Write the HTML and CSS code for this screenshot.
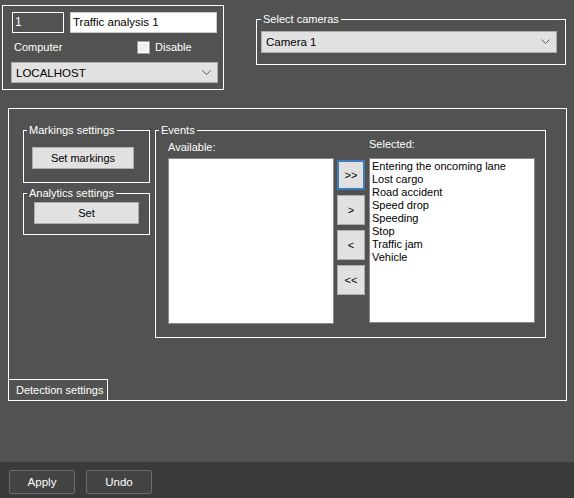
FILE: index.html
```html
<!DOCTYPE html>
<html lang="en">
<head>
    <meta charset="UTF-8">
    <title>Traffic analysis 1</title>
    <link rel="stylesheet" href="styles.css">
</head>
<body>
    <div class="window">
        <div class="content">
            <div class="top">
                <!-- Object id / name / computer -->
                <div class="ident">
                    <div class="row">
                        <div class="field num">1</div>
                        <div class="field name">Traffic analysis 1</div>
                    </div>
                    <div class="row mid">
                        <span class="label computer">Computer</span>
                        <span class="check"></span>
                        <span class="label">Disable</span>
                    </div>
                    <div class="combo host">
                        <span>LOCALHOST</span>
                        <svg width="9" height="6" viewBox="0 0 9 6"><polyline points="0.5,0.5 4.5,4.5 8.5,0.5" fill="none" stroke="#5a5a5a" stroke-width="1"/></svg>
                    </div>
                </div>

                <div class="group cameras">
                    <span class="legend">Select cameras</span>
                    <div class="combo cam">
                        <span>Camera 1</span>
                        <svg width="9" height="6" viewBox="0 0 9 6"><polyline points="0.5,0.5 4.5,4.5 8.5,0.5" fill="none" stroke="#5a5a5a" stroke-width="1"/></svg>
                    </div>
                </div>
            </div>

            <!-- Detection settings tab page -->
            <div class="detect">
                <div class="detect-body">
                    <div class="side">
                        <div class="group markings">
                            <span class="legend">Markings settings</span>
                            <div class="btn wide">Set markings</div>
                        </div>
                        <div class="group analytics">
                            <span class="legend">Analytics settings</span>
                            <div class="btn set">Set</div>
                        </div>
                    </div>

                    <div class="group events">
                        <span class="legend">Events</span>
                        <div class="col">
                            <div class="label cap">Available:</div>
                            <div class="list"></div>
                        </div>
                        <div class="arrows">
                            <div class="btn arrow focus">&gt;&gt;</div>
                            <div class="btn arrow">&gt;</div>
                            <div class="btn arrow">&lt;</div>
                            <div class="btn arrow">&lt;&lt;</div>
                        </div>
                        <div class="col">
                            <div class="label cap sel">Selected:</div>
                            <div class="list short">
                                <div>Entering the oncoming lane</div>
                                <div>Lost cargo</div>
                                <div>Road accident</div>
                                <div>Speed drop</div>
                                <div>Speeding</div>
                                <div>Stop</div>
                                <div>Traffic jam</div>
                                <div>Vehicle</div>
                            </div>
                        </div>
                    </div>
                </div>
                <div class="tab">Detection settings</div>
            </div>
        </div>

        <div class="footer">
            <div class="fbtn">Apply</div>
            <div class="fbtn">Undo</div>
        </div>
    </div>
</body>
</html>
```

FILE: styles.css
```css
/* Dark settings panel */
body {
    margin: 0;
    background: #525252;
    font-family: "Liberation Sans", Arial, sans-serif;
    font-size: 11px;
    color: #fff;
}

.window {
    width: 574px;
    height: 498px;
    display: flex;
    flex-direction: column;
}

.content {
    flex: 1;
}

.top {
    display: flex;
    align-items: flex-start;
}

.ident {
    box-sizing: border-box;
    width: 222px;
    height: 85px;
    margin: 5px 0 0 2px;
    padding: 6px 6px 0 9px;
    border: 1px solid #fff;
}

.row {
    display: flex;
    align-items: center;
}

.field {
    box-sizing: border-box;
    height: 21px;
    line-height: 19px;
    padding: 0 2px;
    border: 1px solid #fff;
    font-size: 12px;
}

.num {
    width: 52px;
    color: #fff;
}

.name {
    width: 147px;
    margin-left: 6px;
    background: #fff;
    color: #000;
    border-color: #c8c8c8;
    font-size: 11.5px;
}

.mid {
    height: 29px;
}

.label {
    line-height: 13px;
}

.computer {
    width: 123px;
    margin-left: 2px;
}

.check {
    box-sizing: border-box;
    width: 13px;
    height: 13px;
    margin-right: 5px;
    border: 1px solid #9a9a9a;
    background: #f0f0f0;
    box-shadow: inset 0 0 0 1px #fff;
}

.combo {
    box-sizing: border-box;
    display: flex;
    align-items: center;
    justify-content: space-between;
    padding: 0 6px 0 4px;
    background: #e1e1e1;
    border: 1px solid #adadad;
    color: #000;
    font-size: 11.5px;
}

.host {
    width: 207px;
    height: 21px;
    margin-left: -1px;
}

.cam {
    width: 296px;
    height: 22px;
}

.group {
    position: relative;
    box-sizing: border-box;
    border: 1px solid #fff;
}

.legend {
    position: absolute;
    top: -7px;
    left: 3px;
    padding: 0 2px;
    background: #525252;
    line-height: 13px;
    white-space: nowrap;
}

.cameras {
    width: 310px;
    height: 46px;
    margin: 19px 0 0 32px;
    padding: 11px 0 0 4px;
}

.cameras .legend {
    left: 4px;
}

.detect {
    box-sizing: border-box;
    display: flex;
    flex-direction: column;
    width: 559px;
    height: 293px;
    margin: 18px 0 0 8px;
    border: 1px solid #fff;
}

.detect-body {
    display: flex;
    align-items: flex-start;
    padding: 21px 0 0 14px;
}

.side {
    width: 127px;
}

.markings {
    height: 53px;
    padding: 16px 0 0 8px;
}

.analytics {
    height: 42px;
    margin-top: 10px;
    padding: 8px 0 0 10px;
}

.btn {
    box-sizing: border-box;
    height: 22px;
    line-height: 20px;
    text-align: center;
    background: #e1e1e1;
    border: 1px solid #adadad;
    color: #000;
    font-size: 11px;
}

.wide {
    width: 102px;
}

.set {
    width: 105px;
}

.events {
    display: flex;
    width: 391px;
    height: 208px;
    margin-left: 5px;
    padding: 10px 0 0 12px;
}

.cap {
    height: 13px;
    margin-bottom: 4px;
}

.cap.sel {
    margin-top: -3px;
    margin-bottom: 7px;
}

.list {
    box-sizing: border-box;
    width: 166px;
    height: 166px;
    padding: 1px 2px;
    background: #fff;
    border: 1px solid #8a8a8a;
    color: #000;
    font-size: 11px;
    line-height: 13px;
}

.list.short {
    height: 165px;
}

.arrows {
    display: flex;
    flex-direction: column;
    gap: 5px;
    margin: 2px 4px 0 3px;
    padding-top: 17px;
}

.arrow {
    width: 28px;
    height: 30px;
    line-height: 28px;
}

.arrow.focus {
    border: 2px solid #3d7ab8;
    line-height: 26px;
}

.tab {
    box-sizing: border-box;
    width: 100px;
    height: 22px;
    margin: auto 0 -1px -1px;
    padding-left: 7px;
    line-height: 20px;
    border: 1px solid #fff;
    white-space: nowrap;
    font-size: 11px;
}

.footer {
    height: 36px;
    box-sizing: border-box;
    display: flex;
    gap: 11px;
    padding: 8px 0 0 9px;
    background: #3b3b3b;
}

.fbtn {
    box-sizing: border-box;
    width: 66px;
    height: 24px;
    line-height: 22px;
    text-align: center;
    border: 1px solid #6b6b6b;
    border-radius: 2px;
    background: #444;
    font-size: 11.5px;
}
```
